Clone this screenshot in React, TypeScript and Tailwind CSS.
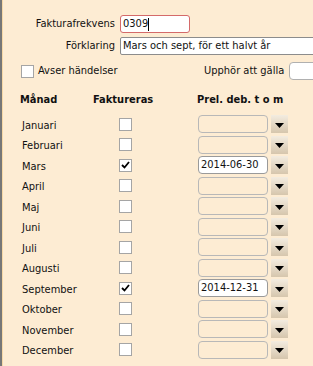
import React from 'react';

const months = [
  { name: 'Januari', checked: false, date: '' },
  { name: 'Februari', checked: false, date: '' },
  { name: 'Mars', checked: true, date: '2014-06-30' },
  { name: 'April', checked: false, date: '' },
  { name: 'Maj', checked: false, date: '' },
  { name: 'Juni', checked: false, date: '' },
  { name: 'Juli', checked: false, date: '' },
  { name: 'Augusti', checked: false, date: '' },
  { name: 'September', checked: true, date: '2014-12-31' },
  { name: 'Oktober', checked: false, date: '' },
  { name: 'November', checked: false, date: '' },
  { name: 'December', checked: false, date: '' },
];

const Checkbox = ({ checked }: { checked: boolean }) => (
  <div className="w-[13px] h-[13px] bg-white border border-[#a5a5a5] flex items-center justify-center">
    {checked && (
      <svg width="9" height="8" viewBox="0 0 9 8">
        <path d="M1 4 L3.5 6.5 L8 1" stroke="#000" strokeWidth="1.8" fill="none" />
      </svg>
    )}
  </div>
);

const DropButton = () => (
  <div className="w-[17px] h-[18px] bg-gradient-to-b from-[#f3ece0] to-[#d6c6ad] flex items-center justify-center">
    <svg width="9" height="5" viewBox="0 0 9 5" className="mt-[2px]">
      <path d="M0 0 H9 L4.5 5 Z" fill="#000" />
    </svg>
  </div>
);

export default function App() {
  return (
    <div
      className="w-[313px] h-[366px] overflow-hidden bg-[#fdecd3] flex text-[11px] text-[#111]"
      style={{ fontFamily: '"DejaVu Sans Condensed", "DejaVu Sans", sans-serif' }}
    >
      <div className="w-[2px] shrink-0 bg-[#777]" />
      <div className="w-[1px] shrink-0 bg-[#f6d8a6]" />
      <div className="w-[310px] shrink-0">
        {/* Top fields */}
        <div className="pt-[15px] flex items-center h-[33px]">
          <span className="w-[114px] shrink-0 text-right pr-[2px]">Fakturafrekvens</span>
          <div className="ml-[3px] w-[70px] h-[18px] bg-white border border-[#d46a6a] rounded-[3px] flex items-center px-[2px]">
            0309<span className="w-[1px] h-[13px] bg-black" />
          </div>
        </div>
        <div className="mt-[4px] flex items-center h-[18px] w-[360px]">
          <span className="w-[114px] shrink-0 text-right pr-[2px]">Förklaring</span>
          <div className="ml-[3px] w-[220px] shrink-0 h-[18px] bg-white border border-[#8c8c8c] rounded-[2px] flex items-center px-[2px]">
            Mars och sept, för ett halvt år
          </div>
        </div>
        <div className="mt-[7px] flex items-center h-[18px] w-[340px]">
          <div className="ml-[18px] shrink-0">
            <Checkbox checked={false} />
          </div>
          <span className="ml-[4px] w-[166px] shrink-0">Avser händelser</span>
          <span className="shrink-0">Upphör att gälla</span>
          <div className="ml-[5px] w-[40px] shrink-0 h-[18px] bg-white border border-[#b0b0b0] rounded-[4px]" />
        </div>

        {/* Month table */}
        <div className="mt-[11px] flex items-center font-bold h-[18px]">
          <span className="ml-[17px] w-[73px] shrink-0">Månad</span>
          <span className="w-[104px] shrink-0">Faktureras</span>
          <span className="shrink-0">Prel. deb. t o m</span>
        </div>
        <div className="mt-[5px]">
          {months.map((m) => (
            <div key={m.name} className="flex items-center h-[20.5px]">
              <span className="ml-[19px] w-[97px] shrink-0 pt-[3px]">{m.name}</span>
              <div className="w-[79px] shrink-0">
                <Checkbox checked={m.checked} />
              </div>
              <div
                className={
                  m.date
                    ? 'w-[70px] shrink-0 h-[18px] bg-white border border-[#9a9a9a] rounded-[4px] flex items-center px-[2px]'
                    : 'w-[70px] shrink-0 h-[18px] border border-[#b8b8b8] rounded-[4px]'
                }
              >
                {m.date}
              </div>
              <div className="ml-[3px] shrink-0">
                <DropButton />
              </div>
            </div>
          ))}
        </div>
      </div>
    </div>
  );
}
